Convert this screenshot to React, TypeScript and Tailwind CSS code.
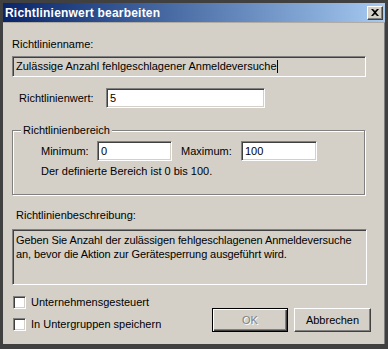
const sunken =
  "border border-t-[#808080] border-l-[#808080] border-b-white border-r-white shadow-[inset_1px_1px_0_#404040,inset_-1px_-1px_0_#d4d0c8]";

const Field = ({ className, children }: { className: string; children?: React.ReactNode }) => (
  <div className={`${sunken} ${className} flex items-center pl-[3px] text-black`}>{children}</div>
);

const Checkbox = ({ label }: { label: string }) => (
  <label className="flex items-center h-[13px] ml-px">
    <span className={`${sunken} w-[13px] h-[13px] bg-white`} />
    <span className="ml-[5px] leading-[13px]">{label}</span>
  </label>
);

const App = () => {
  return (
    <div
      className="w-[388px] h-[349px] bg-[#404040] pt-[3px] pl-[3px] pr-[3px] pb-[5px] flex flex-col text-[11px] text-black"
      style={{ fontFamily: '"Liberation Sans", Arial, sans-serif' }}
    >
      {/* title bar */}
      <div className="h-[19px] shrink-0 flex items-center bg-gradient-to-r from-[#0a246a] to-[#a6caf0] pl-[2px] pr-[2px]">
        <span className="text-white font-bold text-[12px] leading-[14px] tracking-[0.2px]">Richtlinienwert bearbeiten</span>
        <button className="ml-auto w-[16px] h-[14px] bg-[#d4d0c8] border border-t-white border-l-white border-b-[#404040] border-r-[#404040] shadow-[inset_-1px_-1px_0_#808080] flex items-center justify-center">
          <svg width="8" height="7" viewBox="0 0 8 7">
            <path d="M0 0h2l2 2 2-2h2L5 3.5 8 7H6L4 5 2 7H0l3-3.5z" fill="#000" />
          </svg>
        </button>
      </div>

      {/* body */}
      <div className="flex-1 bg-[#d4d0c8] border-t border-r border-t-[#b0aca4] border-r-[#808080] pl-[9px] pt-[15px]">
        <div className="leading-[13px]">Richtlinienname:</div>
        <Field className="mt-[5px] w-[354px] h-[21px]">
          <span>Zulässige Anzahl fehlgeschlagener Anmeldeversuche</span>
          <span className="w-px h-[13px] bg-black" />
        </Field>

        <div className="mt-[11px] flex items-center pl-[7px]">
          <span className="w-[87px]">Richtlinienwert:</span>
          <Field className="w-[159px] h-[20px] bg-white">5</Field>
        </div>

        <fieldset className="mt-[16px] w-[353px] border border-[#808080] shadow-[inset_1px_1px_0_white,1px_1px_0_white] pb-[16px]">
          <legend className="ml-[8px] px-[2px] leading-[13px] bg-[#d4d0c8]">Richtlinienbereich</legend>
          <div className="mt-[4px] flex items-center pl-[28px]">
            <span className="w-[56px]">Minimum:</span>
            <Field className="w-[75px] h-[20px] bg-white">0</Field>
            <span className="ml-[9px] w-[60px]">Maximum:</span>
            <Field className="w-[76px] h-[20px] bg-white">100</Field>
          </div>
          <div className="mt-[4px] pl-[28px] leading-[13px]">Der definierte Bereich ist 0 bis 100.</div>
        </fieldset>

        <div className="mt-[14px] pl-[4px] leading-[13px]">Richtlinienbeschreibung:</div>
        <div className={`${sunken} mt-[7px] w-[355px] h-[56px] pl-[3px] pt-[3px] leading-[14px] tracking-[-0.1px]`}>
          Geben Sie Anzahl der zulässigen fehlgeschlagenen Anmeldeversuche
          <br />
          an, bevor die Aktion zur Gerätesperrung ausgeführt wird.
        </div>

        <div className="mt-[11px] flex items-end w-[359px]">
          <div className="flex flex-col gap-[9px] mb-px">
            <Checkbox label="Unternehmensgesteuert" />
            <Checkbox label="In Untergruppen speichern" />
          </div>
          <button
            disabled
            className="ml-auto w-[76px] h-[24px] bg-[#d4d0c8] border border-black shadow-[inset_1px_1px_0_white,inset_-1px_-1px_0_#404040,inset_-2px_-2px_0_#808080] text-[#808080] [text-shadow:1px_1px_0_white]"
          >
            OK
          </button>
          <button className="ml-[6px] w-[77px] h-[24px] bg-[#d4d0c8] border border-t-white border-l-white border-b-[#404040] border-r-[#404040] shadow-[inset_-1px_-1px_0_#808080]">
            Abbrechen
          </button>
        </div>
      </div>
    </div>
  );
};

export default App;
